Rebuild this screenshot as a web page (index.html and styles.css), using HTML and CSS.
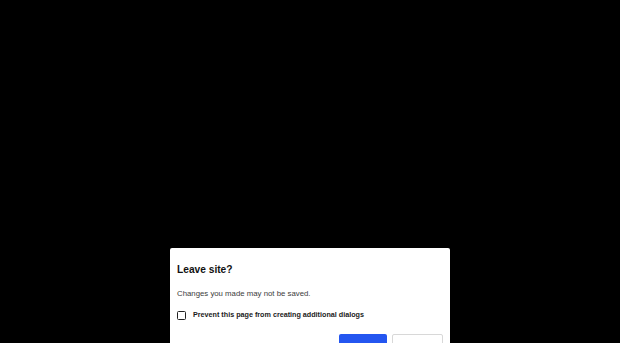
FILE: index.html
```html
<!DOCTYPE html>
<html lang="en">
<head>
<meta charset="utf-8">
<title>Leave site?</title>
<link rel="stylesheet" href="styles.css">
</head>
<body>
<div class="dialog" role="dialog">
  <h1 class="title">Leave site?</h1>
  <p class="message">Changes you made may not be saved.</p>
  <label class="check">
    <span class="box"></span>
    <span class="check-label">Prevent this page from creating additional dialogs</span>
  </label>
  <div class="actions">
    <button class="btn btn-primary" aria-label="Leave"></button>
    <button class="btn btn-secondary" aria-label="Cancel"></button>
  </div>
</div>
</body>
</html>
```

FILE: styles.css
```css
html, body {
  margin: 0;
  height: 100%;
}
body {
  background: #000;
  overflow: hidden;
  display: flex;
  justify-content: center;
  align-items: flex-start;
  padding-top: 248px;
  box-sizing: border-box;
  font-family: "Liberation Sans", Arial, sans-serif;
}
.dialog {
  width: 280px;
  height: 95px;
  overflow: hidden;
  background: #fff;
  border-radius: 2px 2px 0 0;
  padding: 15px 7px 0 7px;
  box-sizing: border-box;
  color: #202124;
}
.title {
  margin: 0;
  font-size: 10.2px;
  line-height: 14px;
  font-weight: bold;
  color: #111;
}
.message {
  margin: 10.5px 0 0 0;
  font-size: 7.8px;
  line-height: 11px;
  color: #3c3c3c;
}
.check {
  display: flex;
  align-items: center;
  gap: 7px;
  margin-top: 11.5px;
}
.box {
  width: 7px;
  height: 7px;
  border: 1.5px solid #222;
  border-radius: 1.5px;
  flex: none;
}
.check-label {
  font-size: 7.2px;
  line-height: 10px;
  font-weight: bold;
  color: #1a1a1a;
}
.actions {
  display: flex;
  justify-content: flex-end;
  gap: 5px;
  margin-top: 14px;
}
.btn {
  height: 22px;
  border-radius: 2px;
  padding: 0;
}
.btn-primary {
  width: 48px;
  background: #2456f0;
  border: none;
}
.btn-secondary {
  width: 51px;
  background: #fff;
  border: 1px solid #d8d8d8;
}
```
